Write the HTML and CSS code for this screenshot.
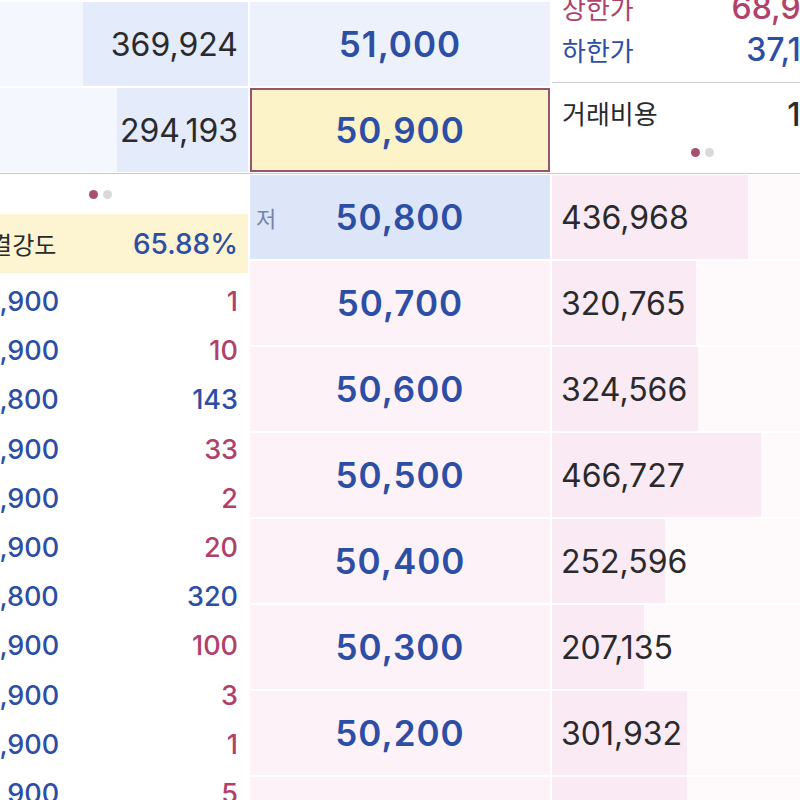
FILE: index.html
```html
<!DOCTYPE html>
<html lang="ko">
<head>
  <meta charset="UTF-8" />
  <meta name="viewport" content="width=device-width, initial-scale=1.0" />
  <title>호가</title>
  <link rel="stylesheet" href="styles.css">
</head>
<body>
  <div class="board">
    <!-- 매도 호가 -->
    <section class="top">
      <div class="col left">
        <div class="vol ask" style="--bar: 165px">369,924</div>
        <div class="vol ask" style="--bar: 131px">294,193</div>
      </div>
      <div class="col mid">
        <div class="price ask"><span class="num">51,000</span></div>
        <div class="price current"><span class="num">50,900</span></div>
      </div>
      <div class="col right">
        <div class="limits">
          <div class="info up"><span>상한가</span><span class="num">68,900</span></div>
          <div class="info down"><span>하한가</span><span class="num">37,100</span></div>
        </div>
        <div class="info cost"><span>거래비용</span><span class="num">1원</span></div>
        <div class="pager"><i class="on"></i><i></i></div>
      </div>
    </section>

    <!-- 매수 호가 -->
    <section class="bottom">
      <div class="col left">
        <div class="pager shift"><i class="on"></i><i></i></div>
        <div class="strength"><span>체결강도</span><span class="num">65.88%</span></div>
        <ul class="ticks">
          <li><span>50,900</span><span class="up">1</span></li>
          <li><span>50,900</span><span class="up">10</span></li>
          <li><span>50,800</span><span>143</span></li>
          <li><span>50,900</span><span class="up">33</span></li>
          <li><span>50,900</span><span class="up">2</span></li>
          <li><span>50,900</span><span class="up">20</span></li>
          <li><span>50,800</span><span>320</span></li>
          <li><span>50,900</span><span class="up">100</span></li>
          <li><span>50,900</span><span class="up">3</span></li>
          <li><span>50,900</span><span class="up">1</span></li>
          <li><span>50,900</span><span class="up">5</span></li>
        </ul>
      </div>
      <div class="col mid">
        <div class="price low"><em>저</em><span class="num">50,800</span></div>
        <div class="price bid"><span class="num">50,700</span></div>
        <div class="price bid"><span class="num">50,600</span></div>
        <div class="price bid"><span class="num">50,500</span></div>
        <div class="price bid"><span class="num">50,400</span></div>
        <div class="price bid"><span class="num">50,300</span></div>
        <div class="price bid"><span class="num">50,200</span></div>
        <div class="price bid"><span class="num">50,100</span></div>
      </div>
      <div class="col right">
        <div class="vol bid" style="--bar: 196px">436,968</div>
        <div class="vol bid" style="--bar: 144px">320,765</div>
        <div class="vol bid" style="--bar: 146px">324,566</div>
        <div class="vol bid" style="--bar: 209px">466,727</div>
        <div class="vol bid" style="--bar: 113px">252,596</div>
        <div class="vol bid" style="--bar: 92px">207,135</div>
        <div class="vol bid" style="--bar: 135px">301,932</div>
        <div class="vol bid" style="--bar: 135px">302,410</div>
      </div>
    </section>
  </div>
</body>
</html>
```

FILE: styles.css
```css
html,
body {
  margin: 0;
  padding: 0;
  overflow: hidden;
  background: #fff;
}

body {
  font-family: Inter, "Noto Sans CJK KR", sans-serif;
  color: #2a2a2d;
}

.board {
  width: 892px;
  margin-left: -40px;
}

.top,
.bottom {
  display: grid;
  grid-template-columns: 288px 300px 300px;
  column-gap: 2px;
}

.top {
  padding-top: 2px;
  padding-bottom: 1px;
  border-bottom: 1px solid #cacaca;
}

.bottom {
  margin-top: 1px;
}

.col {
  display: flex;
  flex-direction: column;
  gap: 2px;
}

/* 잔량 */
.vol {
  height: 84px;
  flex-shrink: 0;
  display: flex;
  align-items: center;
  font-size: 32px;
}

.vol.ask {
  justify-content: flex-end;
  padding-right: 10px;
  background: linear-gradient(to left, #e4ebfa var(--bar), #f4f7fd var(--bar));
}

.vol.bid {
  padding-left: 9px;
  background: linear-gradient(to right, #f9eaf3 var(--bar), #fefafc var(--bar));
}

/* 호가 */
.price {
  height: 84px;
  flex-shrink: 0;
  box-sizing: border-box;
  display: grid;
  grid-template-columns: 1fr auto 1fr;
  align-items: center;
  color: #2d4ea5;
  font-size: 35px;
  font-weight: 600;
  letter-spacing: 1px;
}

.price .num {
  grid-column: 2;
}

.price em {
  grid-column: 1;
  font-style: normal;
  font-weight: 400;
  font-size: 22px;
  letter-spacing: 0;
  color: #7784ab;
  padding-left: 6px;
}

.price.ask {
  background: #edf1fc;
}

.price.current {
  background: #fdf3c9;
  border: 2px solid #94566a;
}

.price.low {
  background: #dde6f9;
}

.price.bid {
  background: #fdf2f7;
}

/* 우측 정보 */
.right .info {
  flex-shrink: 0;
  display: flex;
  justify-content: space-between;
  align-items: center;
  padding: 0 10px;
  height: 42px;
  font-size: 26px;
}

.info .num {
  font-size: 32px;
  font-weight: 500;
}

.info.up {
  color: #b0426a;
}

.info.down {
  color: #2d4ea5;
}

.top .right {
  gap: 0;
}

.limits {
  height: 81px;
  display: flex;
  flex-direction: column;
  justify-content: flex-end;
  padding-bottom: 12px;
  box-sizing: border-box;
  border-bottom: 1px solid #cfcfcf;
}

.right .info.cost {
  margin-top: 8px;
  padding-right: 22px;
}

.pager {
  display: flex;
  justify-content: center;
  gap: 5px;
  padding-top: 15px;
}

.pager i {
  width: 9px;
  height: 9px;
  border-radius: 50%;
  background: #d9d9d9;
}

.pager i.on {
  background: #a9506f;
}

/* 체결 */
.bottom .left {
  gap: 0;
}

.pager.shift {
  height: 39px;
  box-sizing: border-box;
  padding-top: 15px;
  padding-right: 8px;
}

.strength {
  height: 59px;
  display: flex;
  justify-content: space-between;
  align-items: center;
  padding: 0 10px 0 8px;
  background: #fdf4d1;
  font-size: 24px;
}

.strength .num {
  font-size: 28px;
  font-weight: 500;
  color: #2d4ea5;
}

.ticks {
  list-style: none;
  margin: 0;
  padding: 4px 10px 0 6px;
}

.ticks li {
  height: 49.2px;
  display: flex;
  justify-content: space-between;
  align-items: center;
  font-size: 27px;
  font-weight: 500;
  color: #2d4ea5;
}

.ticks .up {
  color: #b0426a;
}
```
